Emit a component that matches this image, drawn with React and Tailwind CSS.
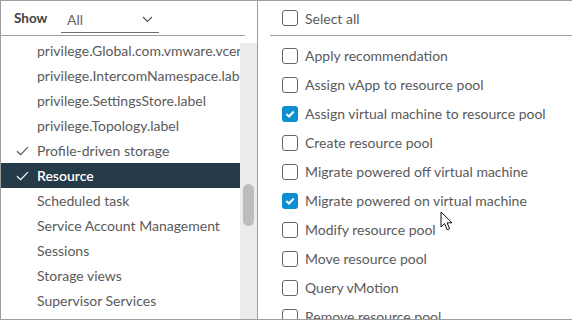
import React from "react";

const font = { fontFamily: "Lato, 'Open Sans', sans-serif" };

const leftItems = [
  { label: "privilege.Global.com.vmware.vcenter.label" },
  { label: "privilege.IntercomNamespace.label" },
  { label: "privilege.SettingsStore.label" },
  { label: "privilege.Topology.label" },
  { label: "Profile-driven storage", check: true },
  { label: "Resource", check: true, active: true },
  { label: "Scheduled task" },
  { label: "Service Account Management" },
  { label: "Sessions" },
  { label: "Storage views" },
  { label: "Supervisor Services" },
];

const rightItems = [
  { label: "Apply recommendation" },
  { label: "Assign vApp to resource pool" },
  { label: "Assign virtual machine to resource pool", checked: true },
  { label: "Create resource pool" },
  { label: "Migrate powered off virtual machine" },
  { label: "Migrate powered on virtual machine", checked: true },
  { label: "Modify resource pool" },
  { label: "Move resource pool" },
  { label: "Query vMotion" },
  { label: "Remove resource pool" },
];

function Check({ color }) {
  return (
    <svg width="13" height="10" viewBox="0 0 13 10" fill="none">
      <path d="M1 5.2 L4.6 8.6 L12 1.2" stroke={color} strokeWidth="1.2" />
    </svg>
  );
}

function Box({ checked }) {
  if (checked) {
    return (
      <div className="w-[16px] h-[16px] rounded-[3px] bg-[#0a8fd1] flex items-center justify-center shrink-0">
        <svg width="10" height="8" viewBox="0 0 10 8" fill="none">
          <path d="M1.3 4 L4 6.5 L8.7 1.5" stroke="#fff" strokeWidth="2" />
        </svg>
      </div>
    );
  }
  return <div className="w-[16px] h-[16px] rounded-[3px] border border-[#666] bg-white shrink-0" />;
}

export default function App() {
  return (
    <div className="w-[572px] h-[325px] bg-white relative" style={font}>
      <div className="w-[572px] h-[320px] border-t border-l border-b border-[#9e9e9e] flex overflow-hidden">
        {/* Left panel */}
        <div className="w-[257px] h-full border-r border-[#9e9e9e] flex flex-col shrink-0">
          <div className="w-[244px] h-[35px] border-b border-[#9e9e9e] flex items-center pl-[13px] shrink-0">
            <span className="text-[13.5px] font-bold text-[#444] w-[47px]">Show</span>
            <div className="w-[98px] h-[26px] border-b border-[#6e6e6e] flex items-center justify-between pl-[6px] pr-[6px] mt-[4px]">
              <span className="text-[14px] text-[#666]">All</span>
              <svg width="11" height="7" viewBox="0 0 11 7" fill="none">
                <path d="M1 1 L5.5 5.5 L10 1" stroke="#555" strokeWidth="1.2" />
              </svg>
            </div>
          </div>
          <div className="flex flex-1 mt-[7px] min-h-0">
            <div className="flex-1 overflow-hidden">
              <div className="mt-[-5px]">
                {leftItems.map((it, i) => (
                  <div
                    key={i}
                    className={
                      "h-[25px] flex items-center whitespace-nowrap " +
                      (it.active ? "bg-[#263b4a] text-white font-semibold" : "text-[#5a5a5a]")
                    }
                  >
                    <div className="w-[36px] pl-[15px] flex items-center shrink-0">
                      {it.check && <Check color={it.active ? "#fff" : "#565656"} />}
                    </div>
                    <span className="text-[14px]">{it.label}</span>
                  </div>
                ))}
              </div>
            </div>
            <div className="w-[17px] bg-[#ececec] shrink-0 pt-[141px] pl-[3px]">
              <div className="w-[11px] h-[42px] rounded-full bg-[#bdbdbd]" />
            </div>
          </div>
        </div>
        {/* Right panel */}
        <div className="flex-1 flex flex-col min-w-0">
          <div className="h-[35px] ml-[12px] border-b border-[#9e9e9e] flex items-center pl-[12px] gap-[7px] shrink-0">
            <Box />
            <span className="text-[14px] text-[#5a5a5a]">Select all</span>
          </div>
          <div className="pt-[5px]">
            {rightItems.map((it, i) => (
              <div key={i} className="h-[29px] flex items-center pl-[24px] gap-[7px] whitespace-nowrap">
                <Box checked={it.checked} />
                <span className="text-[14px] text-[#5a5a5a]">{it.label}</span>
              </div>
            ))}
          </div>
        </div>
      </div>
      <svg className="absolute left-[440px] top-[211px]" width="14" height="21" viewBox="0 0 14 21">
        <path d="M1 1 L1 16 L4.6 12.6 L7.2 18.8 L9.6 17.8 L7.1 11.8 L12 11.8 Z" fill="#fff" stroke="#111" strokeWidth="1" strokeLinejoin="round" />
      </svg>
    </div>
  );
}
